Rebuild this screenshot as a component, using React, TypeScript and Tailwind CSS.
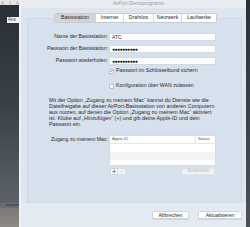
import React from "react";

const font = { fontFamily: '"Liberation Sans", Arial, sans-serif' };

function LeftStrip() {
  return (
    <div className="flex h-full w-[19px] shrink-0 flex-col">
      <div className="flex h-[5px] items-center gap-[5px] bg-[#e6e6e6] pl-[1px]">
        <span className="h-[4px] w-[4px] rounded-full bg-[#c9c9c9]" />
        <span className="h-[4px] w-[4px] rounded-full bg-[#c9c9c9]" />
        <span className="h-[4px] w-[4px] rounded-full bg-[#c9c9c9]" />
      </div>
      <div className="flex flex-1 flex-col bg-gradient-to-b from-[#2a2f37] via-[#3b4149] to-[#5e646c] pt-[12px]">
        <div className="ml-[7px] flex h-[6px] items-center overflow-hidden bg-[#f4f4f4] pl-[1px] text-[4.5px] leading-none text-[#333]">
          Ans
        </div>
        <div className="flex-1" />
        <div className="flex h-[5px] items-center justify-end overflow-hidden whitespace-nowrap bg-[#6a6e73] text-[3.5px] leading-none text-[#1e1e1e]">
          eupnent
        </div>
      </div>
      <div className="h-[19px] bg-gradient-to-b from-[#7c7975] to-[#8d8a86]" />
    </div>
  );
}

function Input({ value, dots }: { value?: string; dots?: boolean }) {
  return (
    <div className="flex h-[8px] items-center border border-[#d4d9df] bg-white pl-[2px] text-[5px] leading-none text-[#2a2a2a]">
      {dots ? (
        <span className="text-[5px] tracking-[-0.5px] text-[#1a1a1a]">●●●●●●●●●●</span>
      ) : (
        value
      )}
    </div>
  );
}

function Checkbox({ checked, label }: { checked?: boolean; label: string }) {
  return (
    <div className="flex h-[6px] items-center gap-[2px]">
      <div className="flex h-[5px] w-[5px] items-center justify-center rounded-[1px] border border-[#b9bec5] bg-white">
        {checked && (
          <svg viewBox="0 0 10 10" className="h-[4px] w-[4px]">
            <path d="M2 5.2 L4.2 7.5 L8 2.5" fill="none" stroke="#222" strokeWidth="1.6" />
          </svg>
        )}
      </div>
      <span className="text-[5.2px] leading-none text-[#2a2a2a]">{label}</span>
    </div>
  );
}

function Tabs() {
  const tabs = [
    { name: "Basisstation", w: "w-[40px]" },
    { name: "Internet", w: "w-[28px]" },
    { name: "Drahtlos", w: "w-[30px]" },
    { name: "Netzwerk", w: "w-[28px]" },
    { name: "Laufwerke", w: "w-[35px]" },
  ];
  return (
    <div className="relative z-10 ml-[33px] flex h-[10px] w-max overflow-hidden rounded-[1.5px] border border-[#c7ccd3] bg-white">
      {tabs.map((t, i) => (
        <div
          key={t.name}
          className={`flex ${t.w} items-center justify-center text-[5.2px] leading-none text-[#2a2a2a] ${
            i === 0 ? "bg-[#d2d4d8]" : ""
          } ${i > 0 ? "border-l border-[#d4d8dd]" : ""}`}
        >
          {t.name}
        </div>
      ))}
    </div>
  );
}

function Table() {
  return (
    <div className="flex h-[31px] flex-col border border-[#d6dbe1] bg-white">
      <div className="flex h-[8px] items-center border-b border-[#e4e6ea] text-[4.2px] leading-none text-[#555]">
        <div className="flex-1 pl-[2px]">Apple-ID</div>
        <div className="flex h-full w-[20px] items-center border-l border-[#e0e2e6] pl-[2px]">Status</div>
      </div>
      <div className="h-[8px] bg-white" />
      <div className="h-[8px] bg-[#f3f3f4]" />
      <div className="flex-1 bg-white" />
    </div>
  );
}

function Window() {
  return (
    <div className="flex h-full flex-1 flex-col border-l-2 border-[#eef1f5] bg-[#dde5ef]">
      <div className="flex h-[8px] items-center justify-center bg-[#e9ecf0] pl-[10px] text-[4.8px] leading-none text-[#9a9da2]">
        AirPort-Dienstprogramm
      </div>
      <div className="mt-[5px]">
        <Tabs />
      </div>
      <div className="-mt-[5px] ml-[6px] mr-[4px] flex h-[185px] flex-col border border-[#cfd7e2] bg-[#d7e1ed] pt-[14px]">
        <div className="grid grid-cols-[80px_107px] items-center gap-x-[1px] gap-y-[4px]">
          <div className="text-right text-[5.2px] leading-none text-[#2a2a2a]">Name der Basisstation:</div>
          <Input value="ATC" />
          <div className="text-right text-[5.2px] leading-none text-[#2a2a2a]">Passwort der Basisstation:</div>
          <Input dots />
          <div className="text-right text-[5.2px] leading-none text-[#2a2a2a]">Passwort wiederholen:</div>
          <Input dots />
        </div>
        <div className="ml-[81px] mt-[3px]">
          <Checkbox checked label="Passwort im Schlüsselbund sichern" />
        </div>
        <div className="ml-[81px] mt-[9px]">
          <Checkbox label="Konfiguration über WAN zulassen" />
        </div>
        <p className="ml-[21px] mt-[8px] w-[167px] text-[5.4px] leading-[6px] text-[#2a2a2a]">
          Mit der Option „Zugang zu meinem Mac“ kannst du Dienste wie die Dateifreigabe auf dieser AirPort-Basisstation von anderen Computern aus nutzen, auf denen die Option „Zugang zu meinem Mac“ aktiviert ist. Klicke auf „Hinzufügen“ (+) und gib deine Apple-ID und dein Passwort ein.
        </p>
        <div className="mt-[8px] grid grid-cols-[80px_107px] gap-x-[1px]">
          <div className="pt-[2px] text-right text-[5.2px] leading-none text-[#2a2a2a]">Zugang zu meinem Mac:</div>
          <div className="flex flex-col">
            <Table />
            <div className="mt-[2px] flex items-center justify-between">
              <div className="ml-[1px] flex h-[7px]">
                <div className="flex w-[8px] items-center justify-center border border-[#cfd3d9] bg-white text-[7px] leading-none text-[#333]">
                  +
                </div>
                <div className="flex w-[8px] items-center justify-center border border-l-0 border-[#dde0e4] bg-[#f4f5f7] text-[7px] leading-none text-[#c4c6ca]">
                  −
                </div>
              </div>
              <div className="mr-[1px] flex h-[7px] w-[33px] items-center justify-center rounded-[1px] border border-[#e1e4e8] bg-[#eef1f5] text-[4.5px] leading-none text-[#b9bcc1]">
                Bearbeiten
              </div>
            </div>
          </div>
        </div>
      </div>
      <div className="flex flex-1 items-start justify-end gap-[9px] bg-[#e4eaf2] pr-[4px] pt-[8px]">
        <div className="flex h-[8px] w-[37px] items-center justify-center rounded-[1.5px] border border-[#d0d4da] bg-white text-[5px] leading-none text-[#2a2a2a] shadow-[0_0.5px_0.5px_rgba(0,0,0,0.15)]">
          Abbrechen
        </div>
        <div className="flex h-[8px] w-[44px] items-center justify-center rounded-[1.5px] border border-[#d0d4da] bg-white text-[5px] leading-none text-[#2a2a2a] shadow-[0_0.5px_0.5px_rgba(0,0,0,0.15)]">
          Aktualisieren
        </div>
      </div>
    </div>
  );
}

export default function App() {
  return (
    <div className="flex h-[227px] w-[250px] overflow-hidden" style={font}>
      <LeftStrip />
      <Window />
      <div className="h-full w-[4px] shrink-0 bg-gradient-to-b from-[#2c3038] to-[#4c5159]" />
    </div>
  );
}
